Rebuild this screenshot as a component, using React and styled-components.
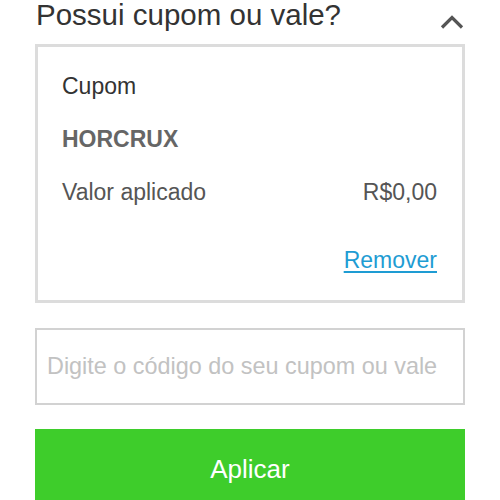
import React from 'react';
import styled, { createGlobalStyle } from 'styled-components';

const GlobalStyle = createGlobalStyle`
  html, body {
    margin: 0;
    padding: 0;
    background: #ffffff;
    overflow: hidden;
  }
  body {
    font-family: "Liberation Sans", Arial, Helvetica, sans-serif;
  }
`;

const Page = styled.div`
  width: 430px;
  padding: 0 35px;
  display: flex;
  flex-direction: column;
`;

const Header = styled.div`
  height: 44px;
  display: flex;
  justify-content: space-between;
  align-items: flex-start;
`;

const Title = styled.h2`
  margin: 0 0 0 1px;
  font-size: 29.5px;
  line-height: 30px;
  font-weight: 400;
  color: #333333;
`;

const Toggle = styled.button`
  margin: 14px 0 0 0;
  padding: 0;
  border: none;
  background: none;
  width: 26px;
  height: 16px;
  display: flex;
`;

const Card = styled.div`
  border: 3px solid #dcdcdc;
  padding: 26px 25px 26px 24px;
  display: flex;
  flex-direction: column;
  gap: 26px;
`;

const Line = styled.div`
  font-size: 23px;
  line-height: 27px;
  color: ${(p) => p.color || '#333333'};
  font-weight: ${(p) => (p.bold ? 700 : 400)};
`;

const Row = styled.div`
  display: flex;
  justify-content: space-between;
  font-size: 23px;
  line-height: 27px;
  color: #555555;
`;

const Actions = styled.div`
  margin-top: 15px;
  display: flex;
  justify-content: flex-end;
`;

const RemoveLink = styled.a`
  font-size: 23px;
  line-height: 27px;
  color: #1e9cd3;
  text-decoration: underline;
  text-underline-offset: 3px;
  cursor: pointer;
`;

const CodeInput = styled.input`
  margin-top: 25px;
  box-sizing: border-box;
  width: 100%;
  height: 77px;
  border: 2px solid #d2d2d2;
  padding: 0 10px;
  font-family: inherit;
  font-size: 23.4px;
  color: #333333;
  outline: none;
  &::placeholder {
    color: #c2c2c2;
  }
`;

const ApplyButton = styled.button`
  margin-top: 24px;
  height: 80px;
  border: none;
  background: #3ecd2b;
  color: #ffffff;
  font-family: inherit;
  font-size: 26px;
  cursor: pointer;
`;

const App = () => {
  return (
    <>
      <GlobalStyle />
      <Page>
        <Header>
          <Title>Possui cupom ou vale?</Title>
          <Toggle aria-label="Recolher">
            <svg width="26" height="16" viewBox="0 0 26 16">
              <polyline
                points="3,13.5 13,3.5 23,13.5"
                fill="none"
                stroke="#555555"
                strokeWidth="3.2"
              />
            </svg>
          </Toggle>
        </Header>
        <Card>
          <Line>Cupom</Line>
          <Line bold color="#666666">HORCRUX</Line>
          <Row>
            <span>Valor aplicado</span>
            <span>R$0,00</span>
          </Row>
          <Actions>
            <RemoveLink>Remover</RemoveLink>
          </Actions>
        </Card>
        <CodeInput placeholder="Digite o código do seu cupom ou vale" />
        <ApplyButton>Aplicar</ApplyButton>
      </Page>
    </>
  );
};

export default App;
